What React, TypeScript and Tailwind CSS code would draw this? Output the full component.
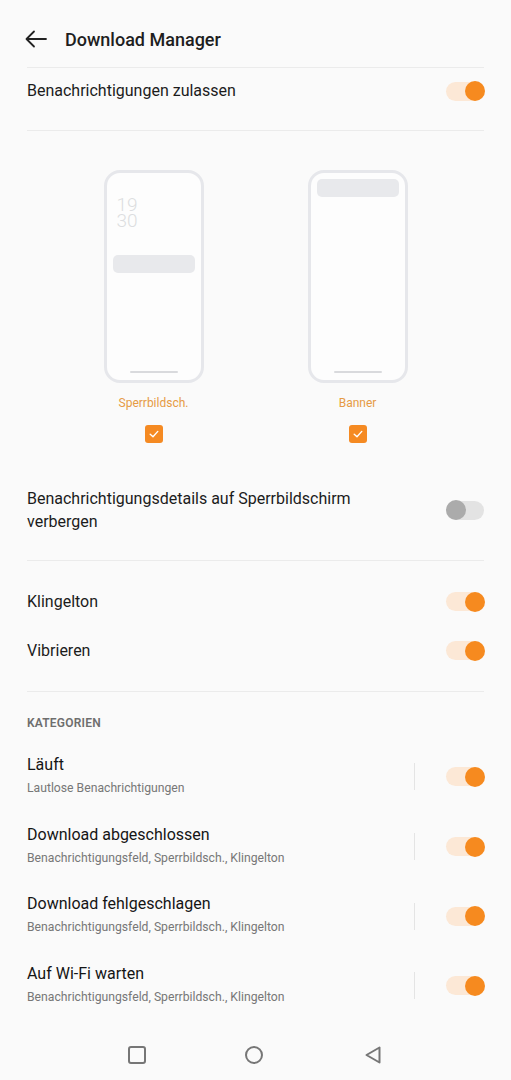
import React from 'react';

const Toggle: React.FC<{ on?: boolean }> = ({ on = true }) => (
  <div className={`relative w-[38px] h-[19px] rounded-full ${on ? 'bg-[#fce8d6]' : 'bg-[#e3e3e3]'}`}>
    <div
      className={`absolute top-1/2 -translate-y-1/2 w-[20px] h-[20px] rounded-full ${
        on ? 'right-[-1px] bg-[#f68a1f]' : 'left-[0px] bg-[#ababab]'
      }`}
    />
  </div>
);

const Divider = () => <div className="h-px bg-[#ebebeb]" />;

const Checkbox = () => (
  <div className="w-[18px] h-[18px] rounded-[3px] bg-[#f58a22] flex items-center justify-center">
    <svg width="12" height="12" viewBox="0 0 12 12" fill="none">
      <path d="M2.2 6.2 L5 8.8 L9.8 3.4" stroke="white" strokeWidth="1.4" strokeLinecap="round" strokeLinejoin="round" />
    </svg>
  </div>
);

const PhoneFrame: React.FC<{ children?: React.ReactNode }> = ({ children }) => (
  <div className="relative w-[100px] h-[213px] rounded-[16px] border-[3px] border-[#e6e7eb] bg-[#fdfdfd]">
    {children}
    <div className="absolute left-1/2 -translate-x-1/2 bottom-[7px] w-[48px] h-[2px] bg-[#d9dadd] rounded-full" />
  </div>
);

const categories = [
  { title: 'Läuft', sub: 'Lautlose Benachrichtigungen' },
  { title: 'Download abgeschlossen', sub: 'Benachrichtigungsfeld, Sperrbildsch., Klingelton' },
  { title: 'Download fehlgeschlagen', sub: 'Benachrichtigungsfeld, Sperrbildsch., Klingelton' },
  { title: 'Auf Wi-Fi warten', sub: 'Benachrichtigungsfeld, Sperrbildsch., Klingelton' },
];

export default function App() {
  return (
    <div className="w-[511px] h-[1080px] bg-[#fafafa] text-[#1c1c1c] font-['Roboto',sans-serif] flex flex-col overflow-hidden">
      {/* header */}
      <div className="flex items-center h-[24px] mt-[27px] mb-[16px] px-[24px]">
        <svg width="24" height="24" viewBox="0 0 24 24" fill="none">
          <path d="M22 12 H3 M10 4.5 L2.5 12 L10 19.5" stroke="#222" strokeWidth="1.8" strokeLinecap="round" strokeLinejoin="round" />
        </svg>
        <span className="ml-[17px] text-[18px] font-medium text-[#1e1e1e]">Download Manager</span>
      </div>

      <div className="px-[27px]">
        <Divider />
        <div className="flex items-center justify-between h-[46px]">
          <span className="text-[16px]">Benachrichtigungen zulassen</span>
          <Toggle />
        </div>
        <div className="h-[16px]" />
        <Divider />

        {/* illustrations */}
        <div className="flex justify-center gap-[104px] pt-[39px]">
          <div className="flex flex-col items-center">
            <PhoneFrame>
              <div className="pl-[10px] pt-[24px] text-[19px] leading-[16px] font-light text-[#dcdde0] whitespace-pre-line">
                {'19\n30'}
              </div>
              <div className="mx-[6px] mt-[26px] h-[18px] rounded-[5px] bg-[#e8e9ec]" />
            </PhoneFrame>
            <span className="mt-[12px] text-[12px] leading-[16px] text-[#e69a45]">Sperrbildsch.</span>
            <div className="mt-[14px]">
              <Checkbox />
            </div>
          </div>
          <div className="flex flex-col items-center">
            <PhoneFrame>
              <div className="mx-[6px] mt-[6px] h-[18px] rounded-[5px] bg-[#e8e9ec]" />
            </PhoneFrame>
            <span className="mt-[12px] text-[12px] leading-[16px] text-[#e69a45]">Banner</span>
            <div className="mt-[14px]">
              <Checkbox />
            </div>
          </div>
        </div>

        <div className="flex items-center justify-between mt-[44px]">
          <span className="text-[16px] leading-[23px] w-[350px]">
            Benachrichtigungsdetails auf Sperrbildschirm verbergen
          </span>
          <Toggle on={false} />
        </div>
        <div className="h-[27px]" />
        <Divider />

        <div className="pt-[16px]">
          <div className="flex items-center justify-between h-[49px]">
            <span className="text-[16px]">Klingelton</span>
            <Toggle />
          </div>
          <div className="flex items-center justify-between h-[49px]">
            <span className="text-[16px]">Vibrieren</span>
            <Toggle />
          </div>
        </div>
        <div className="h-[16px]" />
        <Divider />

        <div className="mt-[24px] text-[12px] leading-[14px] font-semibold text-[#6e6e6e] tracking-[0.2px]">KATEGORIEN</div>

        <div className="mt-[12px] flex flex-col">
          {categories.map((c) => (
            <div key={c.title} className="flex items-center h-[69.7px]">
              <div className="flex-1 flex flex-col">
                <span className="text-[16px] leading-[22px] text-[#151515]">{c.title}</span>
                <span className="text-[12.2px] leading-[24px] text-[#777]">{c.sub}</span>
              </div>
              <div className="w-px h-[27px] bg-[#e4e4e4] mr-[31px]" />
              <Toggle />
            </div>
          ))}
        </div>
      </div>

      {/* nav bar */}
      <div className="mt-auto h-[50px] mb-[0px] flex items-center relative">
        <div className="absolute left-[128px] top-[16px] w-[18px] h-[18px] border-[2px] border-[#767676] rounded-[3px]" />
        <div className="absolute left-[245px] top-[16px] w-[18px] h-[18px] border-[2px] border-[#767676] rounded-full" />
        <svg className="absolute left-[363px] top-[15px]" width="20" height="20" viewBox="0 0 20 20" fill="none">
          <path d="M16.5 2.5 V17.5 L3.5 10 Z" stroke="#767676" strokeWidth="2" strokeLinejoin="round" />
        </svg>
      </div>
    </div>
  );
}
